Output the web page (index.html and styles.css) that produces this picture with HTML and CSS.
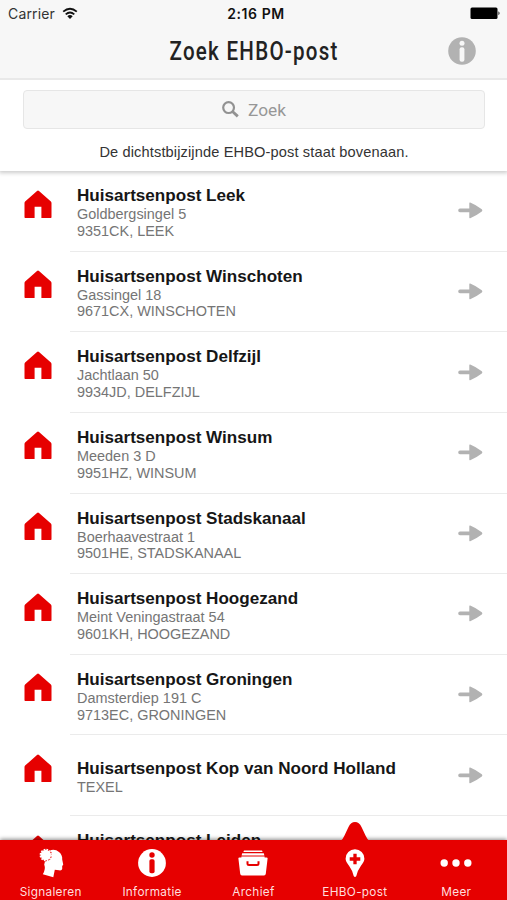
FILE: index.html
```html
<!DOCTYPE html>
<html lang="nl">
<head>
<meta charset="utf-8">
<title>Zoek EHBO-post</title>
<link rel="stylesheet" href="styles.css">
</head>
<body>
<svg class="defs" width="0" height="0">
  <symbol id="house" viewBox="0 0 28 29"><path d="M14 .5Q14.5.5 15 1L26.9 11.6Q27.5 12.2 27.5 13V27.3Q27.5 28 26.8 28H17.4V16.8H10.6V28H1.2Q.5 28 .5 27.3V13Q.5 12.2 1.1 11.6L13 1Q13.5.5 14 .5Z" fill="#e60000"/></symbol>
  <symbol id="arrow" viewBox="0 0 25 17"><path d="M2 6.6H11.3V1.2Q11.3.2 12.2.6Q18.5 3.2 23.8 7.3Q25 8.4 23.8 9.5Q18.5 13.6 12.2 16.2Q11.3 16.6 11.3 15.6V10.2H2A1.8 1.8 0 0 1 2 6.6Z" fill="#b2b2b2"/></symbol>
</svg>
<div class="app">
  <header class="top">
    <div class="status">
      <div class="carrier"><span>Carrier</span>
        <svg width="16" height="13" viewBox="0 0 16 13" fill="none" stroke="#111" stroke-width="1.8"><path d="M1.2 4.7Q8-1.3 14.8 4.7M3.7 7.4Q8 3.5 12.3 7.4"/><path d="M5.3 9.2Q8 7 10.7 9.2L8 12Z" fill="#111" stroke="none"/></svg>
      </div>
      <div class="clock">2:16 PM</div>
      <svg class="battery" width="31" height="13" viewBox="0 0 31 13"><rect x=".5" y=".5" width="27" height="11.5" rx="1.5"/><path d="M28.5 4.3Q30.5 6.3 28.5 8.3Z"/></svg>
    </div>
    <div class="heading">
      <h1>Zoek EHBO-post</h1>
      <svg class="info" width="28" height="28" viewBox="0 0 28 28"><circle cx="14" cy="14" r="13.8" fill="#b2b2b2"/><circle cx="14" cy="6.3" r="2.5" fill="#f7f7f7"/><rect x="11.6" y="10.2" width="4.8" height="14.6" rx="2" fill="#f7f7f7"/></svg>
    </div>
  </header>
  <section class="search">
    <div class="field">
      <svg width="17" height="17" viewBox="0 0 17 17" fill="none" stroke="#929292"><circle cx="6.6" cy="6.6" r="5.4" stroke-width="2.2"/><path d="M10.5 10.5L15.8 15.4" stroke-width="2.8"/></svg>
      <span>Zoek</span>
    </div>
    <p>De dichtstbijzijnde EHBO-post staat bovenaan.</p>
  </section>
  <main class="list">
    <article><svg class="house"><use href="#house"/></svg><div class="row"><div class="text"><h2>Huisartsenpost Leek</h2><p>Goldbergsingel 5</p><p>9351CK, LEEK</p></div><svg class="arrow"><use href="#arrow"/></svg></div></article>
    <article><svg class="house"><use href="#house"/></svg><div class="row"><div class="text"><h2>Huisartsenpost Winschoten</h2><p>Gassingel 18</p><p>9671CX, WINSCHOTEN</p></div><svg class="arrow"><use href="#arrow"/></svg></div></article>
    <article><svg class="house"><use href="#house"/></svg><div class="row"><div class="text"><h2>Huisartsenpost Delfzijl</h2><p>Jachtlaan 50</p><p>9934JD, DELFZIJL</p></div><svg class="arrow"><use href="#arrow"/></svg></div></article>
    <article><svg class="house"><use href="#house"/></svg><div class="row"><div class="text"><h2>Huisartsenpost Winsum</h2><p>Meeden 3 D</p><p>9951HZ, WINSUM</p></div><svg class="arrow"><use href="#arrow"/></svg></div></article>
    <article><svg class="house"><use href="#house"/></svg><div class="row"><div class="text"><h2>Huisartsenpost Stadskanaal</h2><p>Boerhaavestraat 1</p><p>9501HE, STADSKANAAL</p></div><svg class="arrow"><use href="#arrow"/></svg></div></article>
    <article><svg class="house"><use href="#house"/></svg><div class="row"><div class="text"><h2>Huisartsenpost Hoogezand</h2><p>Meint Veningastraat 54</p><p>9601KH, HOOGEZAND</p></div><svg class="arrow"><use href="#arrow"/></svg></div></article>
    <article><svg class="house"><use href="#house"/></svg><div class="row"><div class="text"><h2>Huisartsenpost Groningen</h2><p>Damsterdiep 191 C</p><p>9713EC, GRONINGEN</p></div><svg class="arrow"><use href="#arrow"/></svg></div></article>
    <article><svg class="house"><use href="#house"/></svg><div class="row"><div class="text"><h2>Huisartsenpost Kop van Noord Holland</h2><p>TEXEL</p></div><svg class="arrow"><use href="#arrow"/></svg></div></article>
    <article><svg class="house"><use href="#house"/></svg><div class="row partial"><div class="text"><h2>Huisartsenpost Leiden</h2></div></div></article>
  </main>
  <nav class="tabs">
    <a class="tab"><svg width="30" height="30" viewBox="0 0 30 30" fill="#fff"><path d="M9 13.5Q12.5 13 13.7 9.5Q15.5 5.5 13.5 2.5Q19 .5 23 4Q26.6 7 26.2 11.5L27.2 16.5Q27.3 17.5 26.2 17.7V21Q25.8 22.8 23 22.3L18.8 21.8L17.3 29.2L6.8 26.2Q10 21 8.2 16.5Z"/><circle cx="9.8" cy="7" r="6.2" fill="#e60000"/><circle cx="9.8" cy="7" r="5.2"/><circle cx="9.8" cy="7" r="5.5" fill="none" stroke="#fff" stroke-width="1.5" stroke-dasharray="1.7 1.18"/></svg><span>Signaleren</span></a>
    <a class="tab"><svg width="30" height="30" viewBox="0 0 30 30"><circle cx="15" cy="15" r="13.9" fill="#fff"/><circle cx="15" cy="7" r="2.7" fill="#e60000"/><rect x="12.4" y="11.2" width="5.2" height="14" rx="1.8" fill="#e60000"/></svg><span>Informatie</span></a>
    <a class="tab"><svg width="30" height="30" viewBox="0 0 30 30" fill="#fff"><path d="M6 2.4H24L24.6 4.1H5.4ZM4.2 5.2H25.8L26.4 7.4H3.6ZM3.4 8.5H26.6V9.5H28.5Q29.8 9.5 29.6 10.6L27.8 25.8Q27.6 27.4 26 27.4H4Q2.4 27.4 2.2 25.8L.4 10.6Q.2 9.5 1.5 9.5H3.4Z"/><path d="M9.5 13.2V15.5Q9.5 17 11 17H19Q20.5 17 20.5 15.5V13.2" fill="none" stroke="#e60000" stroke-width="2"/></svg><span>Archief</span></a>
    <a class="tab active"><svg class="bump" width="30" height="20" viewBox="0 0 30 20"><path d="M.5 20Q3 18 4.5 14.5L8.5 6Q10.8 1 15 1T21.5 6L25.5 14.5Q27 18 29.5 20Z" fill="#e60000"/></svg><svg width="30" height="30" viewBox="0 0 30 30"><path d="M15 1.3A9.4 9.4 0 0 1 24.4 10.8Q24.4 13.5 20.8 18Q17.5 22.5 16.3 28Q15 30.2 13.7 28Q12.5 22.5 9.2 18Q5.6 13.5 5.6 10.8A9.4 9.4 0 0 1 15 1.3Z" fill="#fff"/><path d="M15 5.7V16.3M9.7 11H20.3" stroke="#e60000" stroke-width="3.3"/></svg><span>EHBO-post</span></a>
    <a class="tab"><svg width="32" height="30" viewBox="0 0 32 30" fill="#fff"><circle cx="4.2" cy="15" r="3.7"/><circle cx="16" cy="15" r="3.7"/><circle cx="27.8" cy="15" r="3.7"/></svg><span>Meer</span></a>
  </nav>
</div>
</body>
</html>
```
FILE: styles.css
```css
* { box-sizing: border-box; }
body, h1, h2, p { margin: 0; }
body { font-family: "Liberation Sans", Arial, sans-serif; background: #fff; }
.defs { display: block; position: absolute; }
.app { width: 507px; height: 900px; display: flex; flex-direction: column; overflow: hidden; }
.top { height: 80px; flex: none; background: #f7f7f7; border-bottom: 2px solid #e9e9e9; position: relative; z-index: 2; }
.status { height: 27px; display: grid; grid-template-columns: 1fr auto 1fr; align-items: center; padding: 0 6px 0 8px; font-family: Inter, sans-serif; font-size: 13px; color: #333; }
.carrier { display: flex; align-items: center; gap: 7px; font-size: 14px; letter-spacing: .15px; }
.clock { font-weight: 600; font-size: 14px; letter-spacing: .6px; color: #111; padding-left: 3px; }
.battery { justify-self: end; }
.heading { height: 50px; display: grid; grid-template-columns: 1fr auto 1fr; padding: 0 31px; }
h1 { grid-column: 2; font: 500 26px/48px Roboto, sans-serif; letter-spacing: 1.6px; color: #222; white-space: nowrap; transform: translateX(1px) scaleX(.79); margin: 0 -10px; }
.info { justify-self: end; margin-top: 10px; }
.search { height: 91px; flex: none; padding: 10px 22px 0 23px; background: #fff; box-shadow: 0 1px 4px 1px #ccc; z-index: 1; }
.field { height: 39px; display: flex; align-items: center; justify-content: center; gap: 9px; border: 1px solid #e6e6e6; border-radius: 4px; background: #f7f7f7; color: #979797; font: 17.3px Roboto, sans-serif; }
.search p { margin-top: 14px; font-size: 14.6px; letter-spacing: .13px; line-height: 18px; text-align: center; color: #333; }
.list { flex: 1; min-height: 0; overflow: hidden; }
.list article { height: 80.64px; display: grid; grid-template-columns: 70px 1fr; }
.house { width: 28px; height: 29px; margin: 18.6px 0 0 24px; }
.row { display: flex; align-items: center; justify-content: space-between; padding: 0 24px 0 7px; border-bottom: 1px solid #ebebeb; }
.text { padding-top: 4px; }
.partial { align-items: flex-start; padding-top: 11px; }
.arrow { width: 25px; height: 17px; }
h2 { font-size: 17.08px; line-height: 20px; font-weight: bold; color: #161616; }
.row p { font-size: 14.45px; line-height: 16.6px; color: #757575; }
.tabs { height: 60px; flex: none; display: grid; grid-template-columns: repeat(5, 1fr); background: #e60000; box-shadow: 0 -1px 4px rgba(0, 0, 0, .45); z-index: 1; }
.tab { position: relative; display: flex; flex-direction: column; align-items: center; padding: 8px 0 0; color: #ffdede; }
.tab span { margin-top: 6px; font: 11.8px/16px Inter, sans-serif; letter-spacing: .3px; }
.bump { position: absolute; top: -19px; }
```
